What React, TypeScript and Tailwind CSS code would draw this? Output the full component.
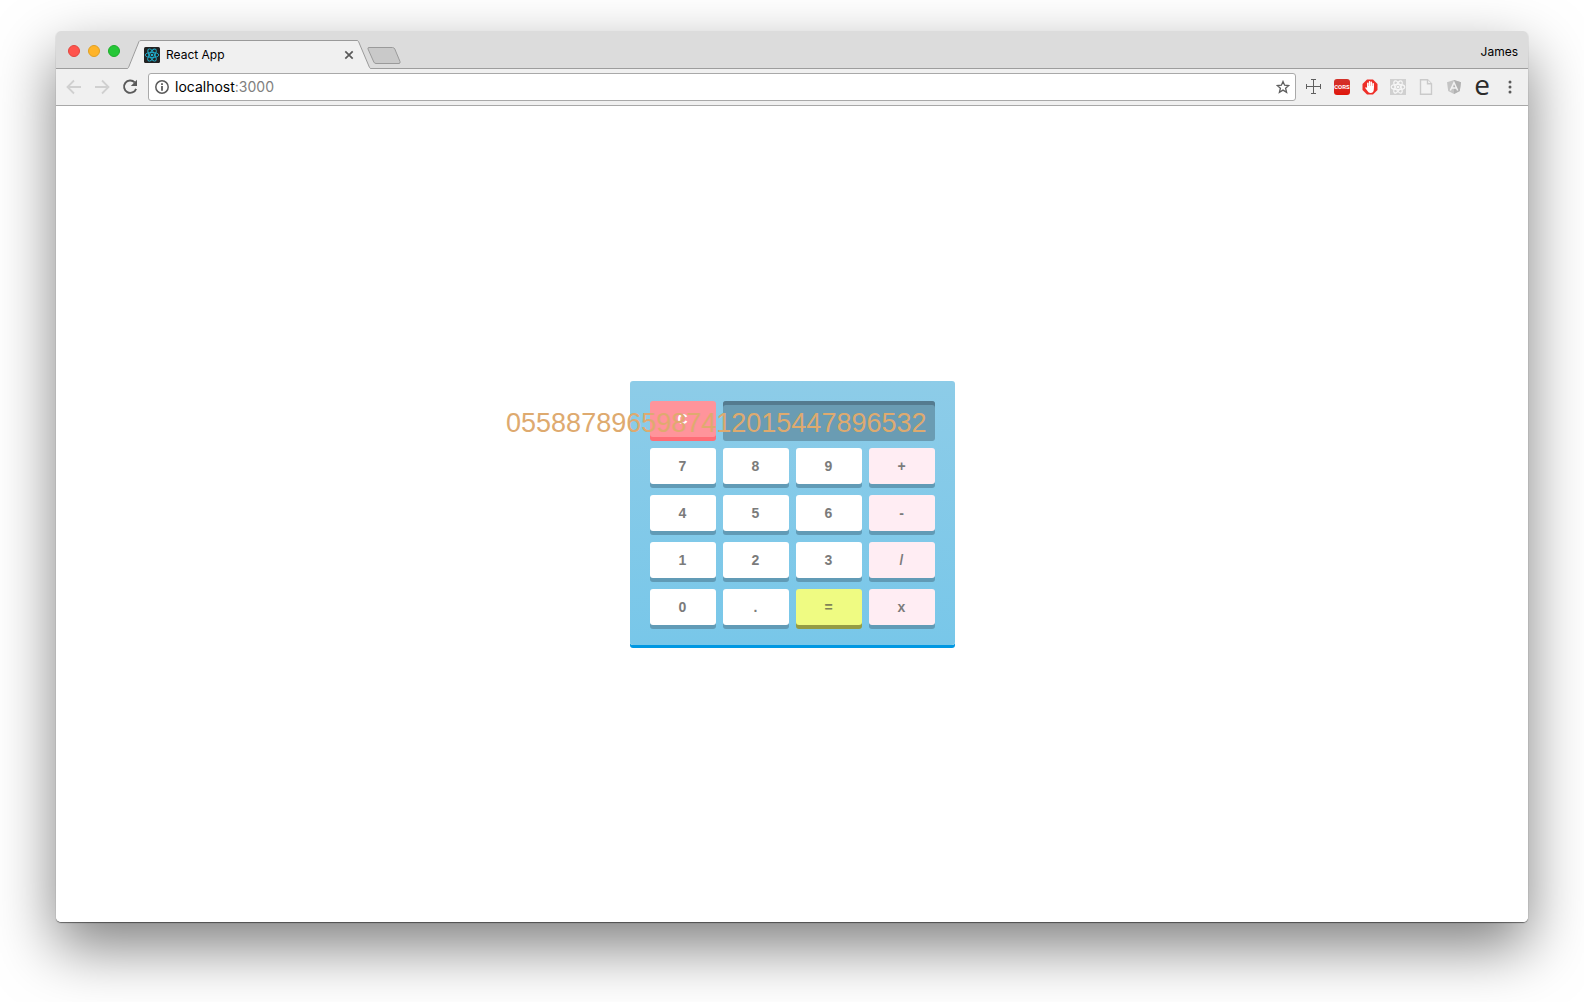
import React from "react";

type Tone = "digit" | "operator" | "equals" | "clear";

const TONES: Record<Tone, string> = {
  digit: "bg-white text-[#7b7b7b] shadow-[0_4px_0_#619bb6]",
  operator: "bg-[#ffedf3] text-[#7b7b7b] shadow-[0_4px_0_#619bb6]",
  equals: "bg-[#effb82] text-[#7f8357] shadow-[0_4px_0_#949c44]",
  clear: "bg-[#ff949b] text-white shadow-[0_4px_0_#ff6d77]",
};

const KEYS: [string, Tone][] = [
  ["7", "digit"], ["8", "digit"], ["9", "digit"], ["+", "operator"],
  ["4", "digit"], ["5", "digit"], ["6", "digit"], ["-", "operator"],
  ["1", "digit"], ["2", "digit"], ["3", "digit"], ["/", "operator"],
  ["0", "digit"], [".", "digit"], ["=", "equals"], ["x", "operator"],
];

function Key({ label, tone }: { label: string; tone: Tone }) {
  return (
    <button
      type="button"
      className={`h-9 rounded-[3px] text-center text-sm leading-9 font-bold ${TONES[tone]}`}
    >
      {label}
    </button>
  );
}

function Calculator() {
  return (
    <section
      aria-label="Calculator"
      className="grid grid-cols-[repeat(4,66px)] gap-x-[7px] gap-y-[11px] rounded-[3px] bg-linear-to-b from-[#8dcce8] to-[#78c7e9] p-5 font-['Liberation_Sans',Arial,sans-serif] shadow-[0_3px_0_#0098e2]"
    >
      <Key label="C" tone="clear" />
      <div className="col-span-3 h-9 min-w-0">
        <output className="flex h-10 justify-end rounded-[3px] bg-[#6a9cb3] pr-2 text-[27px] leading-[45px] whitespace-nowrap text-[#deaa6f] shadow-[inset_0_4px_0_#547b8f]">
          0558878965987412015447896532
        </output>
      </div>
      {KEYS.map(([label, tone]) => (
        <Key key={label} label={label} tone={tone} />
      ))}
    </section>
  );
}

function ReactAtom({ className, width }: { className: string; width: number }) {
  return (
    <g className={className} fill="none" stroke="currentColor" strokeWidth={width}>
      <ellipse cx="8" cy="8" rx="6.8" ry="2.6" />
      <ellipse cx="8" cy="8" rx="6.8" ry="2.6" transform="rotate(60 8 8)" />
      <ellipse cx="8" cy="8" rx="6.8" ry="2.6" transform="rotate(120 8 8)" />
      <circle cx="8" cy="8" r="1.3" fill="currentColor" stroke="none" />
    </g>
  );
}

function TabStrip() {
  return (
    <div className="flex h-[38px] border-b border-[#9d9d9d] bg-[#dcdcdc]">
      <div className="flex items-center gap-2 pt-0.5 pl-3">
        <button type="button" aria-label="Close window" className="size-3 rounded-full border border-[#e2463f] bg-[#ff544d]" />
        <button type="button" aria-label="Minimize window" className="size-3 rounded-full border border-[#e0a023] bg-[#ffb429]" />
        <button type="button" aria-label="Zoom window" className="size-3 rounded-full border border-[#1dad2b] bg-[#25c737]" />
      </div>
      <div className="-mb-px ml-[7px] flex items-end">
        <svg width="14" height="29" viewBox="0 0 14 29" aria-hidden="true">
          <path d="M0 29V28.5L1 27.5L12 1.5Q12.500 .5 14 .5V29Z" fill="#f0f0f0" />
          <path d="M0 28.500Q1 28.500 1.500 27.500L12 1.500Q12.500 .5 14 .5" fill="none" stroke="#9a9a9a" />
        </svg>
        <div className="flex h-[29px] w-[216px] items-center border-t border-[#9a9a9a] bg-[#f0f0f0] pl-[3px]">
          <svg width="16" height="16" viewBox="0 0 16 16" aria-hidden="true">
            <rect width="16" height="16" rx="1.500" fill="#222" />
            <ReactAtom className="text-[#1fb0cf]" width={0.9} />
          </svg>
          <span className="ml-1.5 text-xs leading-4">React App</span>
          <button type="button" aria-label="Close tab" className="mr-[3px] ml-auto">
            <svg width="10" height="10" viewBox="0 0 10 10">
              <path d="M1.300 1.300L8.700 8.700M8.700 1.300L1.300 8.700" stroke="#5a5a5a" strokeWidth="1.700" />
            </svg>
          </button>
        </div>
        <svg width="14" height="29" viewBox="0 0 14 29" aria-hidden="true">
          <path d="M14 29V28.500L12.500 27.500L1.500 1.500Q1 .5 0 .5V29Z" fill="#f0f0f0" />
          <path d="M14 28.500Q13 28.500 12.500 27.500L1.500 1.500Q1 .5 0 .5" fill="none" stroke="#9a9a9a" />
        </svg>
      </div>
      <button type="button" aria-label="New tab" className="-ml-1 self-end pb-1">
        <svg width="34" height="17" viewBox="0 0 34 17">
          <path d="M2 .5H25.500Q27 .5 27.800 2L33 14.500Q33.500 16.500 32 16.500H9Q7.500 16.500 6.800 15L1 2Q.5 .5 2 .5Z" fill="#c9c9c9" stroke="#9a9a9a" />
        </svg>
      </button>
      <button type="button" className="mr-2.5 ml-auto self-center pt-1 text-xs leading-4">James</button>
    </div>
  );
}

function Extensions() {
  return (
    <div className="flex items-center gap-3">
      <button type="button" aria-label="Page ruler">
        <svg width="16" height="16" viewBox="0 0 16 16" fill="none" stroke="#5e5e5e">
          <path d="M.5 7.500H14.500M7.500 .5V14.500M.5 5V10M14.500 5V10M5 .5H10M5 14.500H10" />
        </svg>
      </button>
      <button type="button" aria-label="Toggle CORS" className="flex size-4 items-center justify-center rounded-[3px] bg-linear-to-b from-[#d2322b] to-[#e01408] font-[Roboto,sans-serif] text-[6px] leading-none font-bold text-white">
        CORS
      </button>
      <button type="button" aria-label="Ad blocker">
        <svg width="16" height="16" viewBox="0 0 16 16">
          <path d="M5 .5H11L15.500 5V11L11 15.500H5L.5 11V5Z" fill="#ee2f28" />
          <path d="M5.800 8V4.200M7.600 7.500V2.800M9.400 7.500V3.200M11.200 8V4.800" stroke="#fff" strokeWidth="1.500" strokeLinecap="round" />
          <path d="M5.100 7H11.900V9.500Q11.900 14 8.500 14Q6.500 14 5.500 12L3 8.700Q4.200 7.600 5.100 9Z" fill="#fff" />
        </svg>
      </button>
      <button type="button" aria-label="React developer tools">
        <svg width="16" height="16" viewBox="0 0 16 16">
          <rect width="16" height="16" fill="#d0d0d0" />
          <ReactAtom className="text-[#f6f6f6]" width={1.2} />
        </svg>
      </button>
      <button type="button" aria-label="Document">
        <svg width="16" height="16" viewBox="0 0 16 16" fill="#f2f2f2" stroke="#cacaca" strokeWidth="1.400">
          <path d="M2.500 .7H9.500L13.500 4.700V15.300H2.500Z" />
          <path d="M9.500 .7V4.700H13.500" />
        </svg>
      </button>
      <button type="button" aria-label="Angular tools">
        <svg width="16" height="16" viewBox="0 0 16 16">
          <path d="M8 1L15 3.300L13.800 12L8 15L2.200 12L1 3.300Z" fill="#c4c4c4" />
          <path d="M8 1L15 3.300L13.800 12L8 15Z" fill="#b2b2b2" />
          <path d="M4.300 11.500L8 3.500L11.700 11.500M5.800 9H10.200" fill="none" stroke="#f2f2f2" strokeWidth="1.500" />
        </svg>
      </button>
      <button type="button" aria-label="Extension" className="w-4 text-center font-['Open_Sans',sans-serif] text-[28px] leading-4 text-[#2b2b2b]">
        <span className="-mt-1.5 block">e</span>
      </button>
      <button type="button" aria-label="Menu">
        <svg width="16" height="16" viewBox="0 0 16 16" fill="#5a5a5a">
          <circle cx="8" cy="3" r="1.500" />
          <circle cx="8" cy="8" r="1.500" />
          <circle cx="8" cy="13" r="1.500" />
        </svg>
      </button>
    </div>
  );
}

function Toolbar() {
  return (
    <div className="flex h-[37px] items-center border-b border-[#a8a8a8] bg-[#f0f0f0] px-2.5">
      <div className="flex gap-3">
        <button type="button" aria-label="Back">
          <svg width="16" height="16" viewBox="0 0 16 16" fill="none" stroke="#d0d0d0" strokeWidth="1.800">
            <path d="M15 8H2M8 1.500L1.500 8L8 14.500" />
          </svg>
        </button>
        <button type="button" aria-label="Forward">
          <svg width="16" height="16" viewBox="0 0 16 16" fill="none" stroke="#d0d0d0" strokeWidth="1.800">
            <path d="M1 8H14M8 1.500L14.500 8L8 14.500" />
          </svg>
        </button>
        <button type="button" aria-label="Reload">
          <svg width="16" height="16" viewBox="0 0 16 16">
            <path d="M12.700 3.300A6.200 6.200 0 1 0 14.100 9.800" fill="none" stroke="#5a5a5a" strokeWidth="1.900" />
            <path d="M15 .8V7H8.800Z" fill="#5a5a5a" />
          </svg>
        </button>
      </div>
      <div className="ml-2.5 flex h-7 flex-1 items-center rounded-[3px] border border-[#a9a9a9] bg-white pr-[5px] pl-1.5">
        <svg width="14" height="14" viewBox="0 0 14 14" aria-hidden="true">
          <circle cx="7" cy="7" r="6.200" fill="none" stroke="#5a5a5a" strokeWidth="1.500" />
          <path d="M6.100 6H7.900V10.800H6.100ZM6.100 3.200H7.900V4.900H6.100Z" fill="#5a5a5a" />
        </svg>
        <a href="http://localhost:3000" className="ml-1.5 text-sm leading-5 text-black">
          localhost<span className="text-[#808080]">:3000</span>
        </a>
        <button type="button" aria-label="Bookmark this page" className="ml-auto">
          <svg width="14" height="14" viewBox="0 0 14 14" fill="none" stroke="#5f5f5f" strokeWidth="1.300">
            <path d="M7 1.500L8.600 5.200L12.800 5.500L9.600 8.200L10.600 12.300L7 10.100L3.400 12.300L4.400 8.200L1.200 5.500L5.400 5.200Z" />
          </svg>
        </button>
      </div>
      <div className="ml-2.5">
        <Extensions />
      </div>
    </div>
  );
}

export default function App() {
  return (
    <div className="flex min-h-screen flex-col overflow-hidden bg-white px-14 pt-[31px] pb-20">
      <div className="flex flex-1 flex-col overflow-hidden rounded-[5px] font-[Inter,sans-serif] text-black shadow-[0_1px_1px_rgba(0,0,0,0.5),0_25px_60px_rgba(0,0,0,0.5)]">
        <TabStrip />
        <Toolbar />
        <main className="flex flex-1 items-center justify-center bg-white pb-0.5">
          <Calculator />
        </main>
      </div>
    </div>
  );
}
